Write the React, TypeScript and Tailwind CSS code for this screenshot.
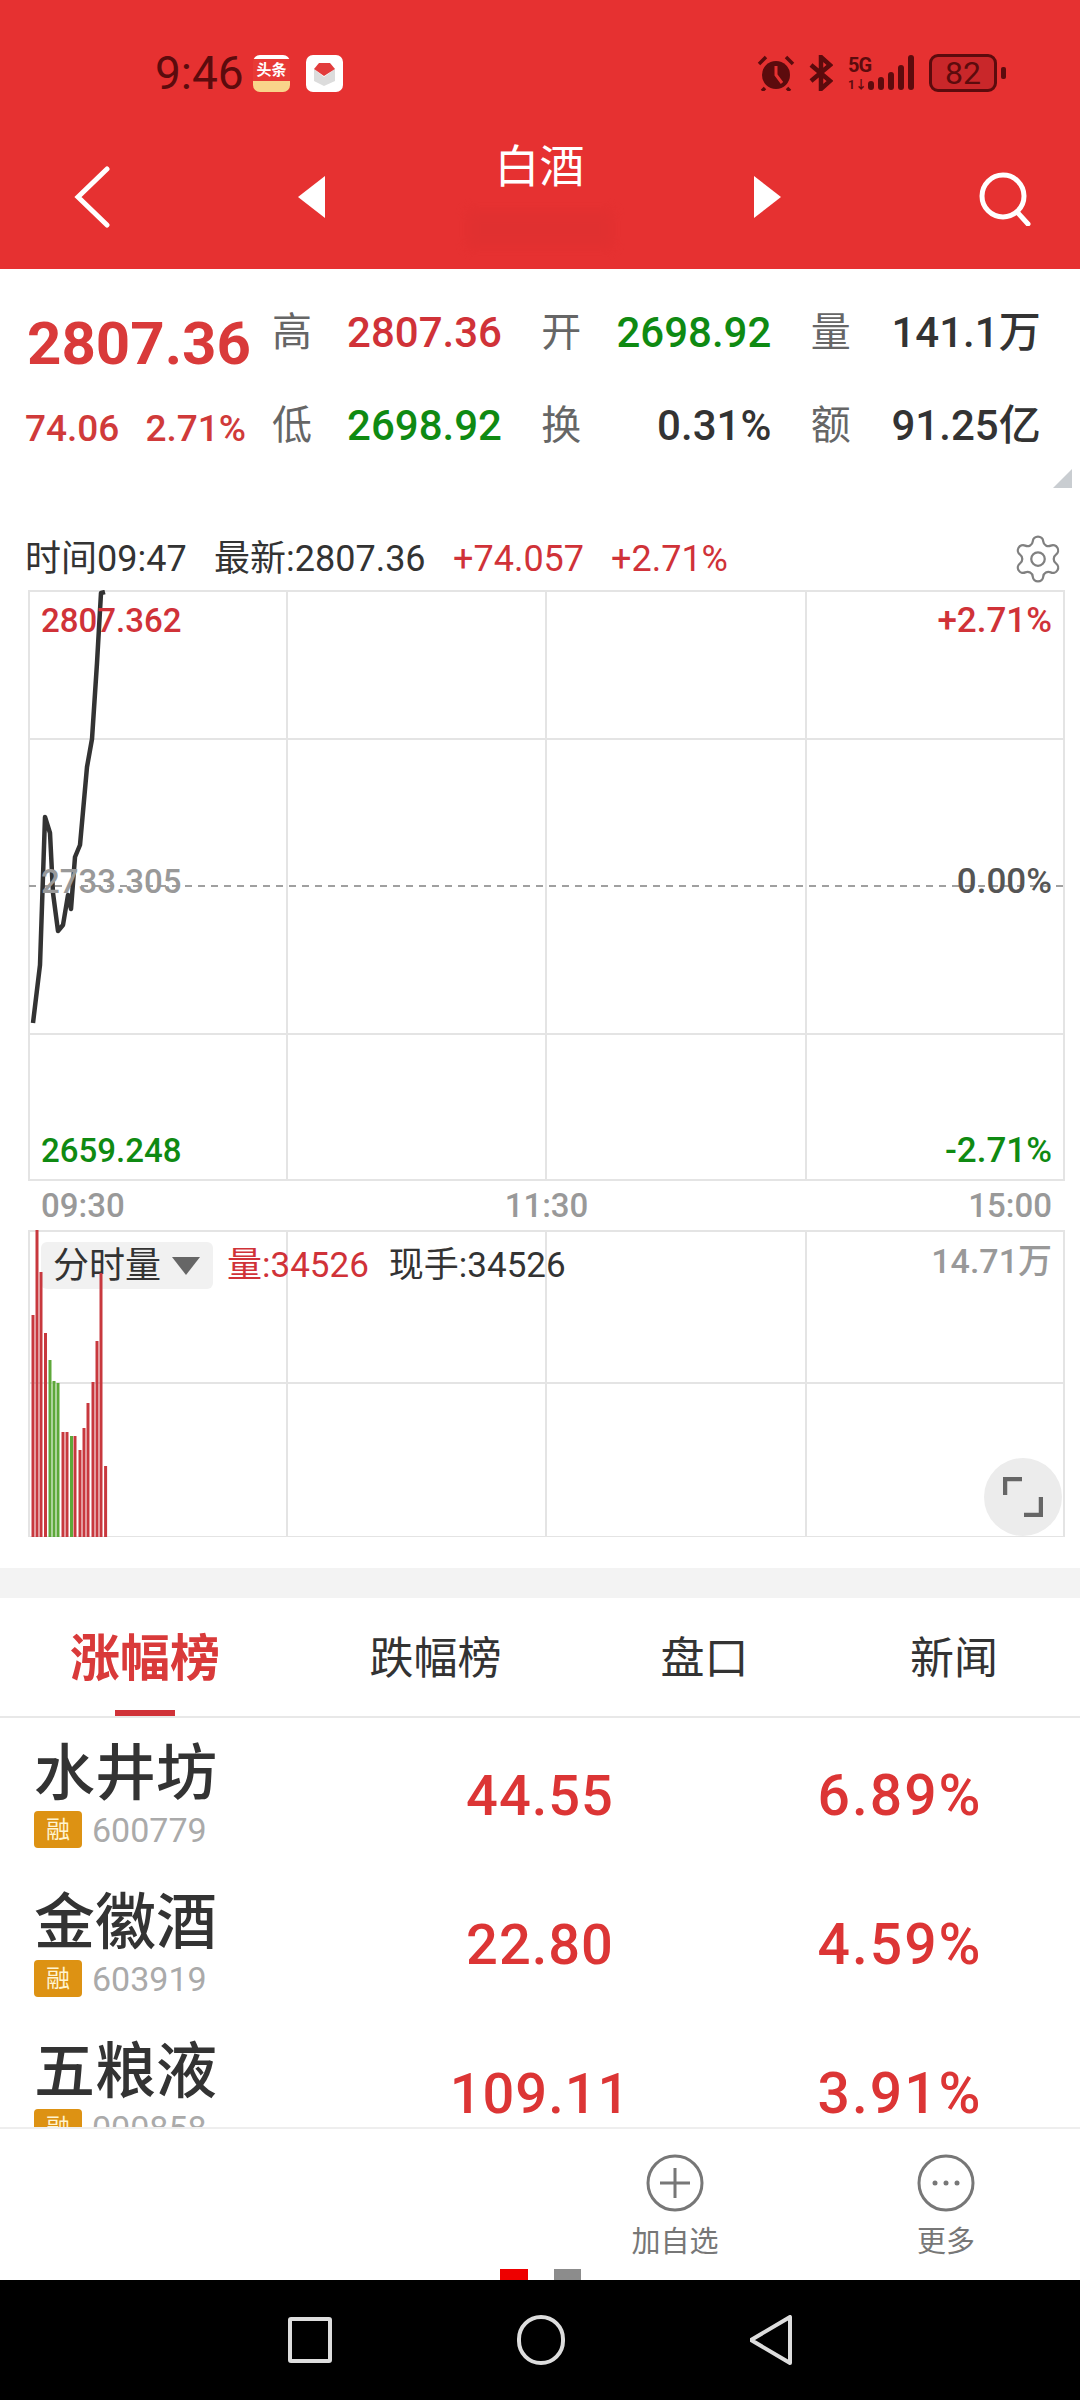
import { Settings } from "lucide-react";

const RED = "text-[#d03238]";
const GREEN = "text-[#0f8a12]";

const linePoints =
  "33,1023 40,965 45,817 50,833 53,893 58,931 63,925 68,895 71,909 75,857 80,845 87,767 92,739 97,663 101,593 105,592";

// x, top y, up or down
const volumeBars: [number, number, boolean][] = [
  [33, 1315, true],
  [37, 1230, true],
  [41, 1272, true],
  [45.5, 1333, true],
  [50, 1360, false],
  [54, 1381, false],
  [58, 1383, false],
  [63, 1432, true],
  [67, 1432, true],
  [71.5, 1436, false],
  [75, 1436, true],
  [80, 1450, true],
  [84, 1428, true],
  [88, 1403, true],
  [93, 1382, true],
  [97, 1341, true],
  [101, 1273, true],
  [105.6, 1466, true],
];

const stocks = [
  { name: "水井坊", code: "600779", price: "44.55", pct: "6.89%" },
  { name: "金徽酒", code: "603919", price: "22.80", pct: "4.59%" },
  { name: "五粮液", code: "000858", price: "109.11", pct: "3.91%" },
];

function StatCell({ label, value, color }: { label: string; value: string; color: string }) {
  return (
    <div className="flex w-[230px] items-center justify-between">
      <span className="text-[40px] text-[#666666]">{label}</span>
      <span className={`text-[42px] font-medium ${color}`}>{value}</span>
    </div>
  );
}

function StatusBar() {
  return (
    <div className="mt-[54px] flex h-[38px] items-center pl-[155px] text-[#5c0b0d]">
      <span className="w-[98px] text-[46px] leading-none font-normal">9:46</span>
      <div className="flex h-[37px] w-[37px] flex-col items-center overflow-hidden rounded-[7px] bg-[#e83a35]">
        <div className="h-[4px] w-full bg-white" />
        <span className="mt-[1px] text-[15px] leading-[20px] font-bold text-white">头条</span>
        <div className="mt-auto h-[11px] w-full bg-[#f9d48a]" />
      </div>
      <div className="ml-[16px] flex h-[37px] w-[37px] items-center justify-center rounded-[7px] bg-white">
        <svg width="27" height="27" viewBox="0 0 27 27">
          <path d="M3 9 L13 17 L24 9 V21 L13 26 L3 21 Z" fill="#dcdcdc" />
          <path d="M3 9 L8 3 H19 L24 9 L13 16 Z" fill="#e23c3c" />
        </svg>
      </div>
      <svg className="ml-[414px]" width="38" height="36" viewBox="0 0 38 36" fill="#5c0b0d">
        <circle cx="19" cy="20" r="14" />
        <path d="M19 11 V20 L25 28" stroke="#e63131" strokeWidth="3" fill="none" />
        <path d="M2 9 L9 2 M36 9 L29 2 M8 33 L5 36 M30 33 L33 36" stroke="#5c0b0d" strokeWidth="3.5" fill="none" />
      </svg>
      <svg className="ml-[14px]" width="24" height="36" viewBox="0 0 24 36" fill="none" stroke="#5c0b0d" strokeWidth="4.5">
        <path d="M2 26 L21 10 L12 2 V34 L21 26 L2 10" />
      </svg>
      <div className="relative ml-[15px] h-[36px] w-[67px]">
        <span className="absolute top-[1px] left-0 text-[20px] leading-[18px] font-bold tracking-[-1px]">5G</span>
        <span className="absolute bottom-[0px] left-0 text-[12px] leading-[12px] font-bold">1↓</span>
        <svg className="absolute top-0 left-0" width="67" height="36" viewBox="0 0 67 36" fill="#5c0b0d">
          <rect x="20" y="26" width="6" height="9" rx="3" />
          <rect x="30" y="22" width="6" height="13" rx="3" />
          <rect x="40" y="17" width="6" height="18" rx="3" />
          <rect x="50" y="10" width="6" height="25" rx="3" />
          <rect x="60" y="0" width="6" height="35" rx="3" />
        </svg>
      </div>
      <div className="ml-[14px] flex h-[38px] w-[68px] items-center justify-center rounded-[9px] border-[3px] border-[#5c0b0d] bg-[#c9272a]">
        <span className="text-[32px] leading-none">82</span>
      </div>
      <div className="ml-[4px] h-[12px] w-[5px] rounded-[2px] bg-[#5c0b0d]" />
    </div>
  );
}

function Header() {
  return (
    <header className="flex h-[269px] shrink-0 flex-col bg-[#e63131]">
      <StatusBar />
      <div className="mt-[44px] flex h-[121px] items-center">
        <svg className="ml-[74px]" width="36" height="62" viewBox="0 0 36 62" fill="none" stroke="white" strokeWidth="5" strokeLinecap="round">
          <path d="M33 3 L4 31 L33 59" />
        </svg>
        <svg className="ml-[188px]" width="27" height="42" viewBox="0 0 27 42" fill="white">
          <path d="M27 0 V42 L0 21 Z" />
        </svg>
        <div className="flex flex-1 flex-col items-center">
          <span className="text-[45px] leading-[44px] text-white">白酒</span>
          <div className="mt-[20px] h-[38px] w-[146px] bg-[#d92f2f] opacity-40 blur-[6px]" />
        </div>
        <svg width="27" height="42" viewBox="0 0 27 42" fill="white">
          <path d="M0 0 V42 L27 21 Z" />
        </svg>
        <svg className="mt-[4px] mr-[49px] ml-[198px]" width="52" height="54" viewBox="0 0 52 54" fill="none" stroke="white" strokeWidth="5" strokeLinecap="round">
          <circle cx="24" cy="24" r="21" />
          <path d="M38 40 L49 52" />
        </svg>
      </div>
    </header>
  );
}

function QuoteBlock() {
  return (
    <section className="relative flex h-[266px] shrink-0 pt-[17px]">
      <div className="flex w-[272px] shrink-0 flex-col pl-[27px]">
        <div className="flex h-[93px] items-center pt-[22px]">
          <span className="text-[60px] leading-none font-bold text-[#d93a3a]">2807.36</span>
        </div>
        <div className="-ml-[2px] flex h-[93px] items-center gap-[26px] pt-[6px] text-[37px] font-medium text-[#d03a3a]">
          <span>74.06</span>
          <span>2.71%</span>
        </div>
      </div>
      <div className="grid flex-1 grid-cols-3 grid-rows-[93px_93px] whitespace-nowrap">
        <StatCell label="高" value="2807.36" color={RED} />
        <StatCell label="开" value="2698.92" color={GREEN} />
        <StatCell label="量" value="141.1万" color="text-[#333333]" />
        <StatCell label="低" value="2698.92" color={GREEN} />
        <StatCell label="换" value="0.31%" color="text-[#333333]" />
        <StatCell label="额" value="91.25亿" color="text-[#333333]" />
      </div>
      {/* corner fold */}
      <svg className="absolute top-[200px] right-[8px]" width="19" height="19" viewBox="0 0 19 19" fill="#c9cdd1">
        <path d="M19 0 V19 H0 Z" />
      </svg>
    </section>
  );
}

function TimeRow() {
  return (
    <div className="flex h-[55px] shrink-0 items-center pb-[7px] pl-[25px] text-[36px] leading-none text-[#333333]">
      <span className="w-[189px]">时间09:47</span>
      <span className="w-[239px]">最新:2807.36</span>
      <span className={`w-[158px] ${RED}`}>+74.057</span>
      <span className={RED}>+2.71%</span>
      <Settings className="mr-[15px] ml-auto" size={54} strokeWidth={1} color="#808080" />
    </div>
  );
}

function PriceChart() {
  return (
    <section className="relative h-[591px] shrink-0 text-[33px] leading-none font-medium">
      <svg className="absolute inset-0" width="1080" height="591" viewBox="0 590 1080 591" fill="none">
        <g stroke="#e4e4e4" strokeWidth="2">
          <rect x="29" y="591" width="1035" height="589" />
          <path d="M287 591 V1180 M546 591 V1180 M806 591 V1180 M29 739 H1064 M29 1034 H1064" />
        </g>
        <path d="M29 886 H1064" stroke="#a0a0a0" strokeWidth="2" strokeDasharray="7 6" />
        <polyline points={linePoints} stroke="#333333" strokeWidth="4.5" strokeLinejoin="round" />
      </svg>
      <span className={`absolute top-[14px] left-[41px] ${RED}`}>2807.362</span>
      <span className={`absolute top-[13px] right-[28px] text-[35px] ${RED}`}>+2.71%</span>
      <span className="absolute top-[275px] left-[41px] text-[#999999]">2733.305</span>
      <span className="absolute top-[274px] right-[28px] text-[35px] text-[#555555]">0.00%</span>
      <span className={`absolute top-[544px] left-[41px] ${GREEN}`}>2659.248</span>
      <span className={`absolute top-[543px] right-[28px] text-[35px] ${GREEN}`}>-2.71%</span>
    </section>
  );
}

function VolumeChart() {
  return (
    <section className="relative h-[307px] shrink-0">
      <svg className="absolute inset-0" width="1080" height="307" viewBox="0 1230 1080 307" fill="none">
        <g stroke="#e4e4e4" strokeWidth="2">
          <rect x="29" y="1231" width="1035" height="306" />
          <path d="M287 1231 V1537 M546 1231 V1537 M806 1231 V1537 M29 1383 H1064" />
        </g>
      </svg>
      <div className="absolute top-[12px] left-[41px] flex items-center gap-[14px] whitespace-nowrap">
        <div className="flex h-[47px] w-[172px] items-center rounded-[6px] bg-[#f1f1f1] pl-[12px] text-[36px] leading-none text-[#333333]">
          分时量
          <svg className="ml-[11px]" width="28" height="18" viewBox="0 0 28 18" fill="#666666">
            <path d="M0 0 H28 L14 18 Z" />
          </svg>
        </div>
        <div className="flex gap-[20px] text-[35px] leading-none">
          <span className={RED}>量:34526</span>
          <span className="text-[#333333]">现手:34526</span>
        </div>
      </div>
      <svg className="absolute inset-0" width="1080" height="307" viewBox="0 1230 1080 307">
        {volumeBars.map(([x, top, up]) => (
          <rect key={x} x={x - 1.5} y={top} width="3" height={1537 - top} fill={up ? "#c8383e" : "#5ea83a"} />
        ))}
      </svg>
      <span className="absolute top-[14px] right-[28px] text-[34px] leading-none font-medium text-[#999999]">14.71万</span>
      <div className="absolute top-[228px] left-[984px] flex h-[78px] w-[78px] items-center justify-center rounded-full bg-[#ececec]">
        <svg width="40" height="40" viewBox="0 0 40 40" fill="none" stroke="#666666" strokeWidth="4.5">
          <path d="M2 18 V2 H19 M21 38 H38 V20" />
        </svg>
      </div>
    </section>
  );
}

function Tabs() {
  return (
    <div className="flex h-[120px] shrink-0 border-b-2 border-[#e8e8e8] pt-[3px] text-[44px] leading-none text-[#333333]">
      <div className="relative flex w-[290px] items-center justify-center">
        <span className="text-[50px] font-bold text-[#d93a3a]">涨幅榜</span>
        <div className="absolute bottom-0 left-[115px] h-[6px] w-[60px] bg-[#d03238]" />
      </div>
      <div className="flex w-[291px] items-center justify-center">跌幅榜</div>
      <div className="flex w-[247px] items-center justify-center">盘口</div>
      <div className="flex w-[252px] items-center justify-center">新闻</div>
    </div>
  );
}

function StockRow({ name, code, price, pct }: { name: string; code: string; price: string; pct: string }) {
  return (
    <div className="grid h-[149px] shrink-0 grid-cols-3">
      <div className="flex flex-col pl-[34px]">
        <span className="mt-[24px] text-[61px] leading-[64px] font-medium text-[#333333]">{name}</span>
        <div className="mt-[5px] flex items-center gap-[10px]">
          <span className="flex h-[37px] w-[48px] items-center justify-center rounded-[4px] bg-[#dd9213] text-[24px] leading-none text-[#fff4d0]">融</span>
          <span className="text-[34px] leading-none text-[#aaaaaa]">{code}</span>
        </div>
      </div>
      <div className="flex items-center justify-center pt-[6px] text-[56px] font-medium tracking-[1px] text-[#dc3535]">{price}</div>
      <div className="flex items-center justify-center pt-[6px] text-[57px] font-medium tracking-[2px] text-[#dc3535]">{pct}</div>
    </div>
  );
}

function ActionBar() {
  return (
    <footer className="flex h-[153px] shrink-0 flex-col border-t-2 border-[#eeeeee]">
      <div className="flex h-[140px] justify-end gap-[91px] pt-[25px] pr-[44px] text-[29px] leading-none text-[#777777]">
        <div className="flex w-[180px] flex-col items-center">
          <svg width="58" height="58" viewBox="0 0 58 58" fill="none" stroke="#777777" strokeWidth="3">
            <circle cx="29" cy="29" r="27" />
            <path d="M14 29 H44 M29 14 V44" />
          </svg>
          <span className="mt-[16px]">加自选</span>
        </div>
        <div className="flex w-[180px] flex-col items-center">
          <svg width="58" height="58" viewBox="0 0 58 58" fill="none" stroke="#777777" strokeWidth="3">
            <circle cx="29" cy="29" r="27" />
            <circle cx="18" cy="29" r="2.5" fill="#777777" stroke="none" />
            <circle cx="29" cy="29" r="2.5" fill="#777777" stroke="none" />
            <circle cx="40" cy="29" r="2.5" fill="#777777" stroke="none" />
          </svg>
          <span className="mt-[16px]">更多</span>
        </div>
      </div>
      <div className="mt-auto flex justify-center gap-[26px]">
        <div className="h-[11px] w-[28px] bg-[#ee0000]" />
        <div className="h-[11px] w-[27px] bg-[#8c8c8c]" />
      </div>
    </footer>
  );
}

function NavBar() {
  return (
    <nav className="flex h-[120px] shrink-0 items-center justify-center gap-[185px] bg-black">
      <div className="h-[46px] w-[44px] rounded-[3px] border-[4px] border-[#dddddd]" />
      <div className="h-[50px] w-[48px] rounded-full border-[4px] border-[#dddddd]" />
      <svg width="42" height="50" viewBox="0 0 42 50" fill="none" stroke="#dddddd" strokeWidth="4" strokeLinejoin="round">
        <path d="M40 2 V48 L1 25 Z" />
      </svg>
    </nav>
  );
}

export default function App() {
  return (
    <div className="flex h-[2400px] w-[1080px] flex-col overflow-hidden bg-white font-['Roboto','Noto_Sans_CJK_SC',sans-serif]">
      <Header />
      <QuoteBlock />
      <TimeRow />
      <PriceChart />
      <div className="flex h-[49px] shrink-0 items-center justify-between pr-[28px] pl-[41px] text-[33px] leading-none font-medium text-[#999999]">
        <span>09:30</span>
        <span>11:30</span>
        <span>15:00</span>
      </div>
      <VolumeChart />
      <div className="h-[31px] shrink-0" />
      <div className="h-[30px] shrink-0 bg-[#f3f3f3]" />
      <Tabs />
      <div className="flex h-[409px] shrink-0 flex-col overflow-hidden">
        {stocks.map((s) => (
          <StockRow key={s.code} {...s} />
        ))}
      </div>
      <ActionBar />
      <NavBar />
    </div>
  );
}
